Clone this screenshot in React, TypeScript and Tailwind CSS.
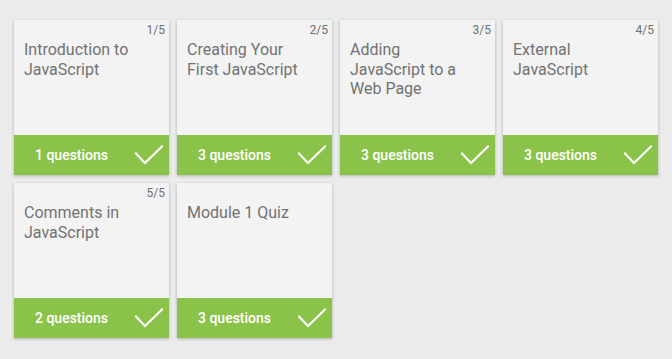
import React from "react";

type Lesson = { title: string; count: number; step?: string };

const lessons: Lesson[] = [
  { title: "Introduction to JavaScript", count: 1, step: "1/5" },
  { title: "Creating Your First JavaScript", count: 3, step: "2/5" },
  { title: "Adding JavaScript to a Web Page", count: 3, step: "3/5" },
  { title: "External JavaScript", count: 3, step: "4/5" },
  { title: "Comments in JavaScript", count: 2, step: "5/5" },
  { title: "Module 1 Quiz", count: 3 },
];

function Check() {
  return (
    <svg width="28" height="20" viewBox="0 0 28 20" fill="none">
      <polyline
        points="1,8.5 10,18 27,1.5"
        stroke="white"
        strokeWidth="2"
        strokeLinecap="square"
      />
    </svg>
  );
}

function LessonCard({ lesson }: { lesson: Lesson }) {
  return (
    <div className="relative flex h-[155px] w-[155px] flex-col bg-[#f3f3f3] shadow-[0_1px_3px_rgba(0,0,0,0.25)]">
      {lesson.step && (
        <span className="absolute right-[4px] top-[2px] text-[12px] leading-[16px] text-[#6f6f6f]">
          {lesson.step}
        </span>
      )}
      <div className="flex-1 pl-[10px] pr-[24px] pt-[20px] text-[16px] leading-[19.5px] text-[#727272]">
        {lesson.title}
      </div>
      <div className="flex h-[40px] items-center justify-between bg-[#8bc34a] pl-[21px] pr-[6px]">
        <span className="text-[14px] font-medium text-white">{lesson.count} questions</span>
        <Check />
      </div>
    </div>
  );
}

export default function App() {
  return (
    <div
      className="min-h-[359px] w-full bg-[#ebebeb] pl-[14px] pt-[20px]"
      style={{ fontFamily: "Roboto, 'Noto Sans', sans-serif" }}
    >
      <div className="grid w-[644px] grid-cols-[repeat(4,155px)] gap-[8px]">
        {lessons.map((l) => (
          <LessonCard key={l.title} lesson={l} />
        ))}
      </div>
    </div>
  );
}
